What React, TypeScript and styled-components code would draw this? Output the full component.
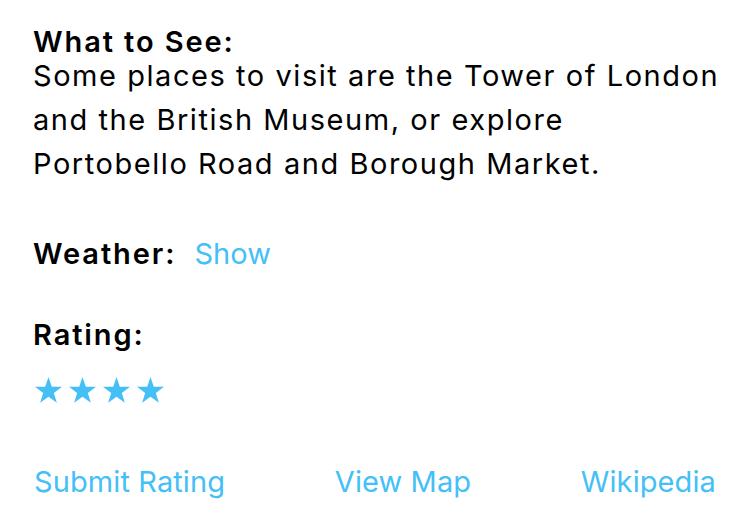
import React from "react";
import styled, { createGlobalStyle } from "styled-components";

const Global = createGlobalStyle`
  html, body { margin: 0; padding: 0; background: #ffffff; }
  body { font-family: Inter, "Noto Sans", sans-serif; -webkit-font-smoothing: antialiased; }
`;

const BLUE = "#44c0f7";

const Page = styled.div`
  width: 750px;
  height: 514px;
  box-sizing: border-box;
  padding: 20px 34px 0 33px;
  display: flex;
  flex-direction: column;
  align-items: stretch;
  color: #000;
  overflow: hidden;
`;

const Label = styled.div`
  font-size: 29px;
  font-weight: 600;
  line-height: 44px;
  letter-spacing: 1.9px;
`;

const Body = styled.p`
  margin: -10px 0 0;
  font-size: 29px;
  font-weight: 400;
  line-height: 44px;
  letter-spacing: 1.55px;
  white-space: nowrap;
`;

const Row = styled.div<{ $top: number }>`
  display: flex;
  align-items: baseline;
  gap: 18px;
  margin-top: ${(p) => p.$top}px;
`;

const LinkText = styled.span`
  font-size: 29px;
  font-weight: 400;
  color: ${BLUE};
  line-height: 44px;
  letter-spacing: 0.1px;
`;

const Stars = styled.div`
  display: flex;
  gap: 7px;
  margin: 20px 0 0 2px;
`;

const Footer = styled.div`
  display: flex;
  justify-content: space-between;
  margin: 57px 0 0 0;
  padding-left: 1px;
`;

const Star = () => (
  <svg width="27" height="26" viewBox="0 0 27 26">
    <path
      d="M13.5 0L16.79 9.67L27 9.81L18.83 15.93L21.85 25.69L13.5 19.8L5.15 25.69L8.17 15.93L0 9.81L10.21 9.67Z"
      fill={BLUE}
    />
  </svg>
);

export default function App() {
  return (
    <>
      <Global />
      <Page>
        <Label>What to See:</Label>
        <Body>
          Some places to visit are the Tower of London
          <br />
          and the British Museum, or explore
          <br />
          Portobello Road and Borough Market.
        </Body>
        <Row $top={46}>
          <Label>Weather:</Label>
          <LinkText>Show</LinkText>
        </Row>
        <Row $top={37}>
          <Label>Rating:</Label>
        </Row>
        <Stars>
          <Star />
          <Star />
          <Star />
          <Star />
        </Stars>
        <Footer>
          <LinkText>Submit Rating</LinkText>
          <LinkText>View Map</LinkText>
          <LinkText>Wikipedia</LinkText>
        </Footer>
      </Page>
    </>
  );
}
